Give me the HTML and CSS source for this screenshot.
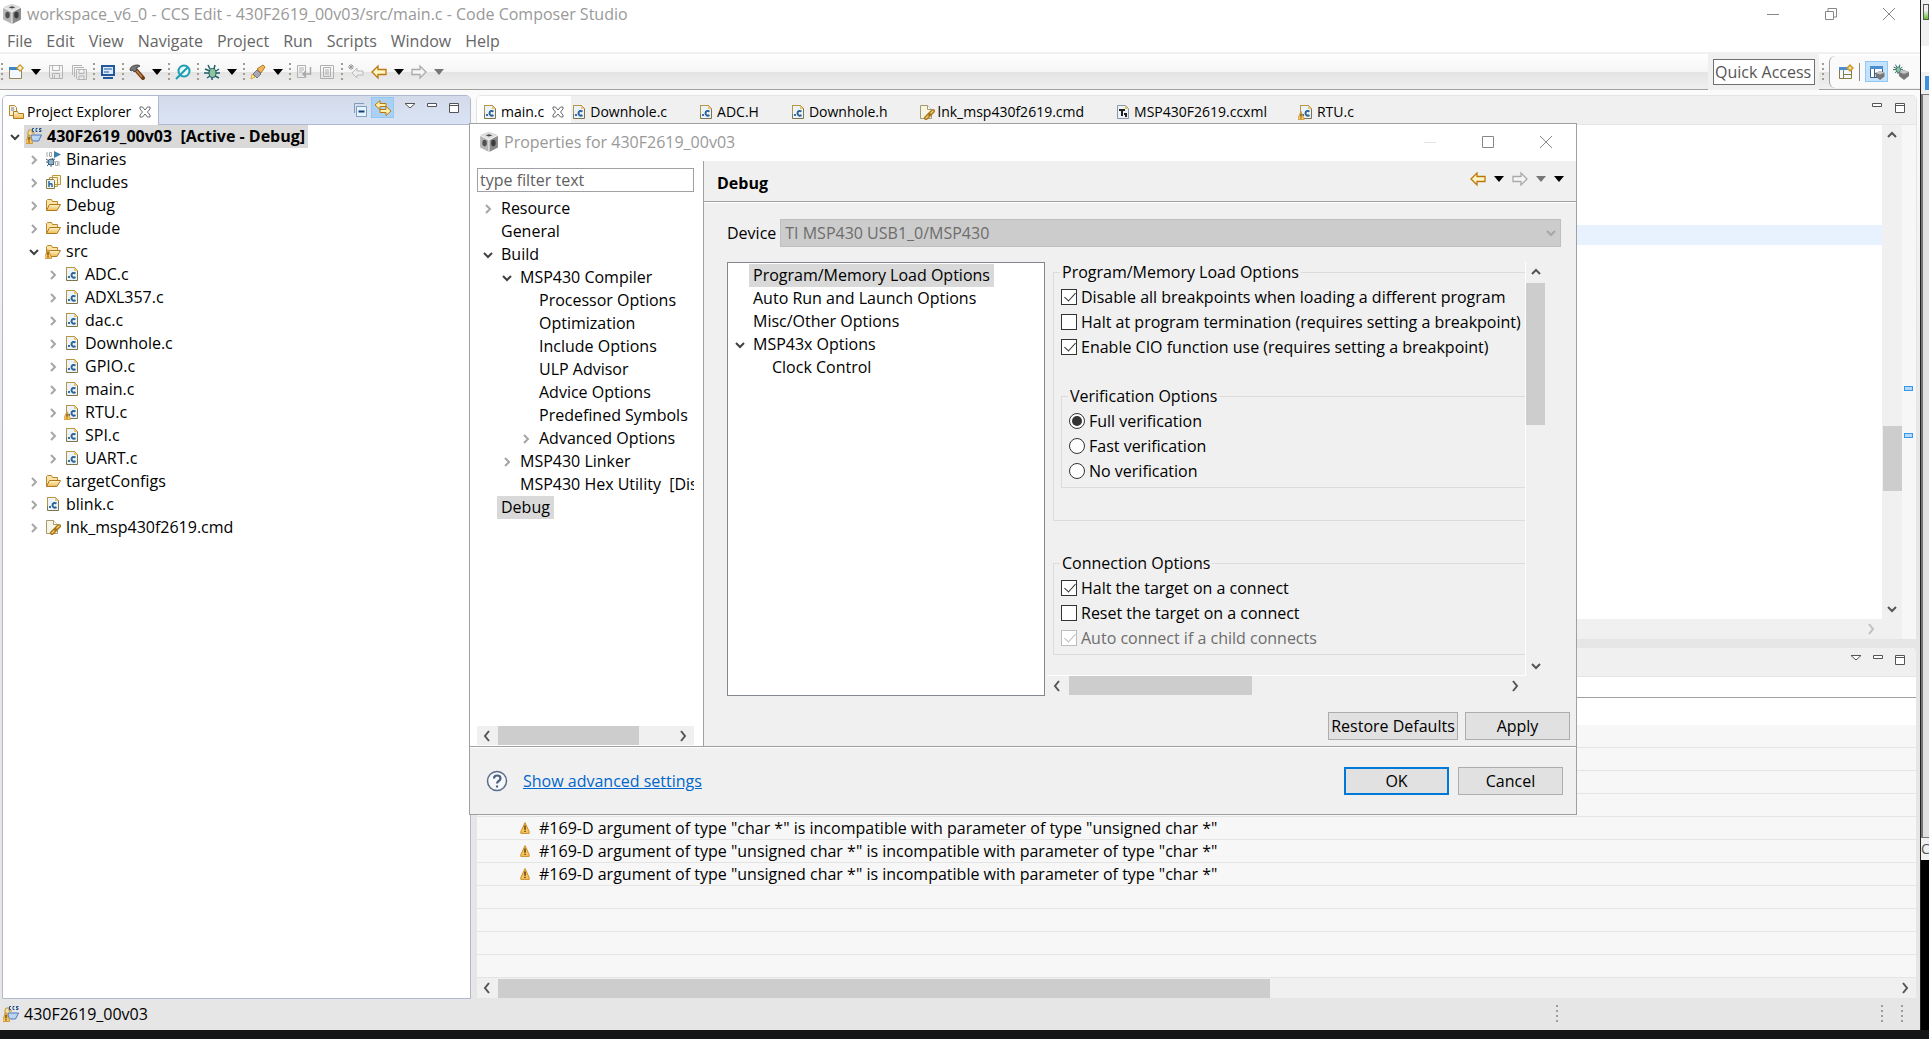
FILE: index.html
```html
<!DOCTYPE html>
<html lang="en">
<head>
<meta charset="utf-8">
<title>workspace_v6_0 - CCS Edit - 430F2619_00v03/src/main.c - Code Composer Studio</title>
<link rel="stylesheet" href="styles.css">
</head>
<body>

<!-- icons -->
<svg class="sprite" width="0" height="0">
	<linearGradient id="gold" x1="0" y1="0" x2="0" y2="1"><stop offset="0" stop-color="#fff6cf"/><stop offset="1" stop-color="#f0b94e"/></linearGradient>
	<symbol id="cube" viewBox="1 1 18 18">
		<path d="M10 1l8 3v11l-8 4-8-4V4z" fill="#b5b5b5"/>
		<path d="M10 1l8 3-8 4-8-4z" fill="#dcdcdc"/>
		<path d="M10 8l8-4v11l-8 4z" fill="#8a8a8a"/>
		<path d="M7 4l3-1 3 1-3 1z" fill="#444"/>
		<ellipse cx="6" cy="11" rx="2" ry="3" fill="#505050"/>
		<ellipse cx="14" cy="11" rx="2" ry="3" fill="#3c3c3c"/>
		<path d="M2 4l8 4 8-4M10 8v11" stroke="#f2f2f2" fill="none"/>
	</symbol>
	<symbol id="arrow-r" viewBox="0 0 10 12"><path d="M3 2l4 4-4 4" fill="none" stroke="#a6a6a6" stroke-width="2"/></symbol>
	<symbol id="arrow-d" viewBox="0 0 10 12"><path d="M1 4l4 4 4-4" fill="none" stroke="#404040" stroke-width="2"/></symbol>
	<symbol id="up" viewBox="0 0 12 12"><path d="M2 8l4-4 4 4" fill="none" stroke="#555" stroke-width="2"/></symbol>
	<symbol id="down" viewBox="0 0 12 12"><path d="M2 4l4 4 4-4" fill="none" stroke="#555" stroke-width="2"/></symbol>
	<symbol id="left" viewBox="0 0 12 12"><path d="M8 1L4 6l4 5" fill="none" stroke="#555" stroke-width="2"/></symbol>
	<symbol id="right" viewBox="0 0 12 12"><path d="M4 1l4 5-4 5" fill="none" stroke="currentColor" stroke-width="2"/></symbol>
	<symbol id="caret" viewBox="0 0 10 6"><path d="M0 0h10L5 6z" fill="currentColor"/></symbol>
	<symbol id="warn" viewBox="0 0 8 10"><path d="M4 .5L7.500 8v1.500h-7V8z" fill="#f7c560" stroke="#c98a24" stroke-width=".8" stroke-linejoin="round"/><path d="M4 3v3.500M4 7.200v1.200" stroke="#5a3a08" stroke-width="1.200"/></symbol>
	<symbol id="cfile" viewBox="0 0 16 16">
		<path d="M2.500 1.500h8l3 3v10h-11z" fill="#eaf2fb" stroke="#7d7448"/>
		<path d="M2.500 10V1.500h8l3 3" fill="none" stroke="#b9963f"/>
		<path d="M10 1.500v3.500h3.500z" fill="#e9c46d"/>
		<rect x="4" y="10" width="2" height="2" fill="#3a6ea5"/>
		<path d="M11.500 7.500c-1.500-1-4-.8-4 1.800s2.500 2.800 4 1.800" fill="none" stroke="#2e6496" stroke-width="2"/>
	</symbol>
	<symbol id="cwarn" viewBox="0 0 16 16"><use href="#cfile" width="16" height="16"/><use href="#warn" x="-1" y="7" width="8" height="9"/></symbol>
	<symbol id="lnk" viewBox="0 0 16 16">
		<path d="M1.500 1.500h7l4 4v9h-11z" fill="#f6f4e4" stroke="#a79a6c"/>
		<path d="M8.500 1.500v4h4" fill="#fff" stroke="#a79a6c"/>
		<path d="M7 14l3-3M10 11l4-4" stroke="#a5741a" stroke-width="4" stroke-linecap="round"/>
		<path d="M7 14l2-2M12 9l2-2" stroke="#f1cd6a" stroke-width="1.500" stroke-linecap="round"/>
	</symbol>
	<symbol id="ccxml" viewBox="0 0 16 16">
		<path d="M2.500 1.500h8l3 3v10h-11z" fill="#eef3f8" stroke="#8b98a8"/>
		<path d="M10 1.500v3.500h3.500z" fill="#e9c46d"/>
		<path d="M4 5h6v2H8v5H6V7H4zM9 9h3v4h-2v-2H9z" fill="#222"/>
	</symbol>
	<symbol id="folder" viewBox="0 0 16 16">
		<path d="M1.500 13.500v-10l1-1h4l1 2h5v3" fill="#fbe3a6" stroke="#b9852f"/>
		<path d="M1.500 13.500l3-6h11l-3.500 6z" fill="url(#gold)" stroke="#b07820"/>
	</symbol>
	<symbol id="fwarn" viewBox="0 0 16 16"><use href="#folder" width="16" height="16"/><use href="#warn" x="-1" y="6" width="8" height="10"/></symbol>
	<symbol id="ccs" viewBox="0 0 16 16">
		<path d="M2 13V4l1-2h3v3h3" fill="#f7dfa4" stroke="#b9963f"/>
		<path d="M5 7h10.500l-3 6H8c-2 0-3-3-3-6z" fill="#bcd5f3" stroke="#4a78b5"/>
		<path d="M8 .5H6.500v3H8M11.500 .5H10v3h1.500M15.500 .5H13.500v1.500h1.500v1.500h-2" fill="none" stroke="#234f8c"/>
		<use href="#warn" x="-1" y="6" width="8" height="10"/>
	</symbol>
	<symbol id="bin" viewBox="0 0 16 16">
		<path d="M2 1v5M4.500 1.500h2v4h-2zM14 10v5M10.500 10.500h2v4h-2z" fill="none" stroke="#a9a9a9"/>
		<path d="M9 0l7 3.500L9 7z" fill="#3e7fa8"/>
		<circle cx="6" cy="11" r="3" fill="#8fb0c8" stroke="#3b5f7c"/>
		<path d="M1 8l3 2M1 11h2M2 15l2-2M8 7l-1 2M9 14l-1-1M6 14v2M10 8L8 9" stroke="#3b5f7c"/>
	</symbol>
	<symbol id="inc" viewBox="0 0 16 16">
		<path d="M7.500 1.500h8v9h-8zM4.500 3.500h8v9h-8z" fill="#fbf3d6" stroke="#b9963f"/>
		<path d="M1.500 5.500h7l1 1v8h-8z" fill="#eaf2fb" stroke="#8a7b45"/>
		<path d="M4 7v6M4 10.500c2-1.500 3-.5 3 .5v2" fill="none" stroke="#2e6496" stroke-width="1.500"/>
	</symbol>
	<symbol id="explorer" viewBox="0 0 16 16">
		<path d="M1.500 1.500h5l2 2v8h-7z" fill="#fbf3d6" stroke="#b9852f"/>
		<path d="M3 4h3M3 6h3" stroke="#5f86b5"/>
		<path d="M5.500 14.500v-7h4l1 2h5v5z" fill="url(#gold)" stroke="#b07820"/>
	</symbol>
	<symbol id="close" viewBox="0 0 12 12"><path d="M1 1h2.500L6 4l2.500-3H11v2L8.500 6 11 9v2H8.500L6 8l-2.500 3H1V9l2.500-3L1 3z" fill="#fff" stroke="#6a6a6a"/></symbol>
	<symbol id="min" viewBox="0 0 12 12"><path d="M1.500 1.500h9v3h-9z" fill="#fff" stroke="#555"/></symbol>
	<symbol id="max" viewBox="0 0 12 12"><path d="M1.500 1.500h9v9h-9zM1.500 3.500h9" fill="#fff" stroke="#555"/></symbol>
	<symbol id="menu" viewBox="0 0 12 12"><path d="M1 1.500h10l-5 4.500z" fill="#fff" stroke="#555"/></symbol>
	<symbol id="collapse" viewBox="0 0 16 16"><path d="M2.500 11V1.500H12" fill="none" stroke="#7f9db9"/><path d="M4.500 4.500h10v10h-10z" fill="#e6f4ff" stroke="#7f9db9"/><path d="M6.500 9.500h6" stroke="#123f74" stroke-width="2"/></symbol>
	<symbol id="link" viewBox="0 0 16 16"><path d="M0 5l5-4.500v3h6v3H5v3zM16 11l-5-4.500v3H5v3h6v3z" fill="#fff0b0" stroke="#b9780c"/></symbol>
	<symbol id="new" viewBox="0 0 16 16"><path d="M1.500 3.500h12v11h-12z" fill="#f1f8ff" stroke="#9a8450"/><path d="M1 3h10v3H1z" fill="#3f86c8"/><path d="M12 0l4 4-4 4-4-4z" fill="#c99a2c"/><path d="M12 2v4M10 4h4" stroke="#fff6d0" stroke-width="1.500"/></symbol>
	<symbol id="save" viewBox="0 0 16 16"><path d="M1.500 1.500h13v13h-12l-1-1zM4.500 1.500v5h7v-5M4.500 14.500v-5h7v5M6.500 14v-3" fill="none" stroke="#b3b3b3"/></symbol>
	<symbol id="saveall" viewBox="0 0 16 16"><path d="M11 1.500H1.500V11M13 3.500H3.500V13M5.500 5.500h10v10h-9l-1-1zM8 5.500v4h5v-4M8 15v-3h5v3" fill="none" stroke="#b3b3b3"/></symbol>
	<symbol id="screen" viewBox="0 0 16 16"><path d="M1 1h14v11H1z" fill="#23589b"/><path d="M3 3h10v7H3z" fill="#dcecff"/><path d="M4 5h8M4 8h5" stroke="#23589b"/><path d="M3 14h10" stroke="#23589b" stroke-width="2"/></symbol>
	<symbol id="hammer" viewBox="0 0 16 16"><path d="M7 6l7 8" stroke="#6b3a14" stroke-width="4" stroke-linecap="round"/><path d="M7 6l6 7" stroke="#c98546" stroke-width="1.500"/><path d="M1 6c0-3 3-5 8-5l2 1-4 2 1 2-3 2-1-2-2 1z" fill="#777" stroke="#4a4a4a"/></symbol>
	<symbol id="find" viewBox="0 0 16 16"><circle cx="9" cy="7" r="5.500" fill="#eafafc" stroke="#1c9cb0" stroke-width="2"/><path d="M13 3L1 15" stroke="#1c9cb0" stroke-width="2"/></symbol>
	<symbol id="bug" viewBox="0 0 16 16"><ellipse cx="8.500" cy="9" rx="3.500" ry="4.500" fill="#8fc49a" stroke="#1d6068"/><path d="M1 5l5 2M0 9h5M3 14l3-2M12 7l3-2M12 9h4M11 12l4 2M6 5L4 1M10 5l1-4M8 13v3" stroke="#1d6068" stroke-width="1.500"/></symbol>
	<symbol id="torch" viewBox="0 0 16 16"><path d="M1 15l1-5 3 3z" fill="#fff3a0" stroke="#d9a93a"/><path d="M3 10l4-4 4 4-4 4z" fill="#a8a8b4" stroke="#76768a"/><path d="M7 5l6-4 2 2-4 6z" fill="#f2b85c" stroke="#b37420"/></symbol>
	<symbol id="page" viewBox="0 0 16 16"><path d="M1.500 1.500h8v12h-8zM3 4h5M3 6h5M3 8h3" fill="none" stroke="#b0b0b0"/><path d="M14.500 3v7H7M10 7l-3 3 3 3" fill="none" stroke="#a8a8a8" stroke-width="1.500"/></symbol>
	<symbol id="block" viewBox="0 0 16 16"><path d="M1.500 1.500h13v13h-13zM4.500 3.500h7v9h-7zM6 6h4M6 8h4M6 10h4" fill="none" stroke="#b0b0b0"/></symbol>
	<symbol id="last" viewBox="0 0 16 16"><path d="M4 9l5-5v3h6v4H9v3z" fill="#eee" stroke="#bbb"/><path d="M3 0v6M0 3h6M1 1l4 4M5 1L1 5" stroke="#999"/></symbol>
	<symbol id="back" viewBox="0 0 16 16"><path d="M1 8l6-6v3.500h8v5H7V14z" fill="#fff4c4" stroke="#b9780c" stroke-width="1.300"/></symbol>
	<symbol id="fwd" viewBox="0 0 16 16"><path d="M15 8L9 2v3.500H1v5h8V14z" fill="#f6f6f6" stroke="#aaa" stroke-width="1.300"/></symbol>
	<symbol id="persp" viewBox="0 0 16 16"><path d="M1.500 3.500h12v11h-12zM5.500 6v8M5 10.500h8" fill="#f1f8ff" stroke="#8a7b45"/><path d="M1 3h11v3H1z" fill="#4a90d0"/><path d="M12 0l4 4-4 4-4-4z" fill="#c99a2c"/><path d="M12 2.500v3M10.500 4h3" stroke="#fff6d0"/></symbol>
	<symbol id="gem" viewBox="0 0 10 10"><path d="M5 0l5 2v4l-5 4-5-4V2z" fill="#777"/><path d="M5 0l5 2-5 2-5-2z" fill="#c4c4c4"/></symbol>
	<symbol id="edit" viewBox="0 0 16 16"><path d="M1.500 2.500h12v11h-12zM5.500 5v8M5 9.500h8" fill="#fff" stroke="#355f8c"/><path d="M1 2h13v3H1z" fill="#4a90d0"/><use href="#gem" x="6" y="7" width="10" height="9"/></symbol>
	<symbol id="debug" viewBox="0 0 16 16"><use href="#bug" width="10" height="10"/><use href="#gem" x="6" y="6" width="10" height="10"/></symbol>
	<symbol id="help" viewBox="0 0 22 22"><circle cx="11" cy="11" r="9.500" fill="#f6f8fb" stroke="#5b6d8c" stroke-width="1.500"/><path d="M8 8.500c0-4 6.500-4 6.500 0 0 2.500-3.500 2.500-3.500 5M11 15.500v2" fill="none" stroke="#4b5f82" stroke-width="2.200"/></symbol>
	<symbol id="w-min" viewBox="0 0 14 14"><path d="M1 7.500h12" stroke="currentColor"/></symbol>
	<symbol id="w-max" viewBox="0 0 14 14"><path d="M1.500 1.500h11v11h-11z" fill="none" stroke="#888"/></symbol>
	<symbol id="w-rest" viewBox="0 0 14 14"><path d="M1.500 4.500h8v8h-8zM4 4V1.500h8.500V10H10" fill="none" stroke="#888"/></symbol>
	<symbol id="w-close" viewBox="0 0 14 14"><path d="M1 1l12 12M13 1L1 13" stroke="#888"/></symbol>
</svg>

<div class="screen">
<div class="window">
	<div class="titlebar">
		<svg class="i20"><use href="#cube"/></svg>
		<span class="title">workspace_v6_0 - CCS Edit - 430F2619_00v03/src/main.c - Code Composer Studio</span>
		<div class="winbtns">
			<button aria-label="Minimize"><svg class="i14"><use href="#w-min"/></svg></button>
			<button aria-label="Restore"><svg class="i14"><use href="#w-rest"/></svg></button>
			<button aria-label="Close"><svg class="i14"><use href="#w-close"/></svg></button>
		</div>
	</div>
	<nav class="menubar">
		<a href="#">File</a><a href="#">Edit</a><a href="#">View</a><a href="#">Navigate</a><a href="#">Project</a><a href="#">Run</a><a href="#">Scripts</a><a href="#">Window</a><a href="#">Help</a>
	</nav>
	<div class="toolbar">
		<i class="dots"></i>
		<button aria-label="New"><svg class="i16"><use href="#new"/></svg></button>
		<button aria-label="New menu"><svg class="caret"><use href="#caret"/></svg></button>
		<button aria-label="Save"><svg class="i16"><use href="#save"/></svg></button>
		<button aria-label="Save all"><svg class="i16"><use href="#saveall"/></svg></button>
		<i class="dots"></i>
		<button aria-label="Console"><svg class="i16"><use href="#screen"/></svg></button>
		<i class="dots"></i>
		<button aria-label="Build"><svg class="i16"><use href="#hammer"/></svg></button>
		<button aria-label="Build menu"><svg class="caret"><use href="#caret"/></svg></button>
		<i class="dots"></i>
		<button aria-label="Find"><svg class="i16"><use href="#find"/></svg></button>
		<i class="dots"></i>
		<button aria-label="Debug"><svg class="i16"><use href="#bug"/></svg></button>
		<button aria-label="Debug menu"><svg class="caret"><use href="#caret"/></svg></button>
		<i class="dots"></i>
		<button aria-label="Search"><svg class="i16"><use href="#torch"/></svg></button>
		<button aria-label="Search menu"><svg class="caret"><use href="#caret"/></svg></button>
		<i class="dots"></i>
		<button aria-label="Word wrap"><svg class="i16"><use href="#page"/></svg></button>
		<button aria-label="Block selection"><svg class="i16"><use href="#block"/></svg></button>
		<i class="dots"></i>
		<button aria-label="Last edit"><svg class="i16"><use href="#last"/></svg></button>
		<button aria-label="Back"><svg class="i16"><use href="#back"/></svg></button>
		<button aria-label="Back menu"><svg class="caret"><use href="#caret"/></svg></button>
		<button aria-label="Forward"><svg class="i16"><use href="#fwd"/></svg></button>
		<button aria-label="Forward menu"><svg class="caret off"><use href="#caret"/></svg></button>
		<div class="quick"><input type="text" placeholder="Quick Access" aria-label="Quick Access"></div>
		<i class="dots"></i>
		<div class="perspectives">
			<button aria-label="Open perspective"><svg class="i16"><use href="#persp"/></svg></button>
			<i class="bar"></i>
			<button class="on" aria-label="CCS Edit"><svg class="i16"><use href="#edit"/></svg></button>
			<button aria-label="CCS Debug"><svg class="i16"><use href="#debug"/></svg></button>
		</div>
	</div>

	<div class="work">
		<section class="panel explorer">
			<div class="tabs">
				<div class="tab active"><svg class="i16"><use href="#explorer"/></svg>Project Explorer<svg class="i12"><use href="#close"/></svg></div>
				<div class="tools">
					<button aria-label="Collapse all"><svg class="i16"><use href="#collapse"/></svg></button>
					<button class="on" aria-label="Link with editor"><svg class="i16"><use href="#link"/></svg></button>
					<button aria-label="View menu"><svg class="i12"><use href="#menu"/></svg></button>
					<button aria-label="Minimize"><svg class="i12"><use href="#min"/></svg></button>
					<button aria-label="Maximize"><svg class="i12"><use href="#max"/></svg></button>
				</div>
			</div>
			<ul class="tree files">
				<li><svg class="exp"><use href="#arrow-d"/></svg><span class="sel bold"><svg class="i16"><use href="#ccs"/></svg>430F2619_00v03&nbsp; [Active - Debug]</span></li>
				<li class="d1"><svg class="exp"><use href="#arrow-r"/></svg><span><svg class="i16"><use href="#bin"/></svg>Binaries</span></li>
				<li class="d1"><svg class="exp"><use href="#arrow-r"/></svg><span><svg class="i16"><use href="#inc"/></svg>Includes</span></li>
				<li class="d1"><svg class="exp"><use href="#arrow-r"/></svg><span><svg class="i16"><use href="#folder"/></svg>Debug</span></li>
				<li class="d1"><svg class="exp"><use href="#arrow-r"/></svg><span><svg class="i16"><use href="#folder"/></svg>include</span></li>
				<li class="d1"><svg class="exp"><use href="#arrow-d"/></svg><span><svg class="i16"><use href="#fwarn"/></svg>src</span></li>
				<li class="d2"><svg class="exp"><use href="#arrow-r"/></svg><span><svg class="i16"><use href="#cfile"/></svg>ADC.c</span></li>
				<li class="d2"><svg class="exp"><use href="#arrow-r"/></svg><span><svg class="i16"><use href="#cfile"/></svg>ADXL357.c</span></li>
				<li class="d2"><svg class="exp"><use href="#arrow-r"/></svg><span><svg class="i16"><use href="#cfile"/></svg>dac.c</span></li>
				<li class="d2"><svg class="exp"><use href="#arrow-r"/></svg><span><svg class="i16"><use href="#cfile"/></svg>Downhole.c</span></li>
				<li class="d2"><svg class="exp"><use href="#arrow-r"/></svg><span><svg class="i16"><use href="#cfile"/></svg>GPIO.c</span></li>
				<li class="d2"><svg class="exp"><use href="#arrow-r"/></svg><span><svg class="i16"><use href="#cfile"/></svg>main.c</span></li>
				<li class="d2"><svg class="exp"><use href="#arrow-r"/></svg><span><svg class="i16"><use href="#cwarn"/></svg>RTU.c</span></li>
				<li class="d2"><svg class="exp"><use href="#arrow-r"/></svg><span><svg class="i16"><use href="#cfile"/></svg>SPI.c</span></li>
				<li class="d2"><svg class="exp"><use href="#arrow-r"/></svg><span><svg class="i16"><use href="#cfile"/></svg>UART.c</span></li>
				<li class="d1"><svg class="exp"><use href="#arrow-r"/></svg><span><svg class="i16"><use href="#folder"/></svg>targetConfigs</span></li>
				<li class="d1"><svg class="exp"><use href="#arrow-r"/></svg><span><svg class="i16"><use href="#cfile"/></svg>blink.c</span></li>
				<li class="d1"><svg class="exp"><use href="#arrow-r"/></svg><span><svg class="i16"><use href="#lnk"/></svg>lnk_msp430f2619.cmd</span></li>
			</ul>
		</section>

		<div class="column">
			<section class="panel editor">
				<div class="tabs">
					<div class="tab active"><svg class="i16"><use href="#cfile"/></svg>main.c<svg class="i12"><use href="#close"/></svg></div>
					<div class="tab"><svg class="i16"><use href="#cfile"/></svg>Downhole.c</div>
					<div class="tab"><svg class="i16"><use href="#cfile"/></svg>ADC.H</div>
					<div class="tab"><svg class="i16"><use href="#cfile"/></svg>Downhole.h</div>
					<div class="tab"><svg class="i16"><use href="#lnk"/></svg>lnk_msp430f2619.cmd</div>
					<div class="tab"><svg class="i16"><use href="#ccxml"/></svg>MSP430F2619.ccxml</div>
					<div class="tab"><svg class="i16"><use href="#cwarn"/></svg>RTU.c</div>
					<div class="tools">
						<button aria-label="Minimize"><svg class="i12"><use href="#min"/></svg></button>
						<button aria-label="Maximize"><svg class="i12"><use href="#max"/></svg></button>
					</div>
				</div>
				<div class="code">
					<div class="text"><div class="current"></div></div>
					<div class="vscroll"><svg class="i12"><use href="#up"/></svg><i class="thumb"></i><svg class="i12 end"><use href="#down"/></svg></div>
					<div class="ruler"><i></i><i></i></div>
					<div class="hscroll"><svg class="i12 faint end"><use href="#right"/></svg></div>
				</div>
			</section>

			<section class="panel problems">
				<div class="tabs">
					<div class="tools">
						<button aria-label="View menu"><svg class="i12"><use href="#menu"/></svg></button>
						<button aria-label="Minimize"><svg class="i12"><use href="#min"/></svg></button>
						<button aria-label="Maximize"><svg class="i12"><use href="#max"/></svg></button>
					</div>
				</div>
				<table>
					<thead><tr><th></th></tr></thead>
					<tbody>
						<tr class="first"><td></td></tr>
						<tr><td></td></tr>
						<tr><td></td></tr>
						<tr><td></td></tr>
						<tr><td></td></tr>
						<tr><td><svg class="i12"><use href="#warn"/></svg>#169-D argument of type "char *" is incompatible with parameter of type "unsigned char *"</td></tr>
						<tr><td><svg class="i12"><use href="#warn"/></svg>#169-D argument of type "unsigned char *" is incompatible with parameter of type "char *"</td></tr>
						<tr><td><svg class="i12"><use href="#warn"/></svg>#169-D argument of type "unsigned char *" is incompatible with parameter of type "char *"</td></tr>
						<tr><td></td></tr>
						<tr><td></td></tr>
						<tr><td></td></tr>
						<tr><td></td></tr>
					</tbody>
				</table>
				<div class="hscroll"><svg class="i12"><use href="#left"/></svg><i class="thumb"></i><svg class="i12 end"><use href="#right"/></svg></div>
			</section>
		</div>
	</div>

	<div class="status">
		<svg class="i16"><use href="#ccs"/></svg><span>430F2619_00v03</span>
		<i class="dots mid"></i><i class="dots"></i><i class="dots"></i>
	</div>
</div>
<div class="behind"><i class="pic"></i><i class="line"></i><i class="blue"></i><div class="body"></div><span>C</span></div>
</div>
<div class="taskbar"><span>10:00</span></div>

<!-- properties dialog -->
<div class="dialog" role="dialog" aria-label="Properties for 430F2619_00v03">
	<div class="titlebar">
		<svg class="i20"><use href="#cube"/></svg>
		<span class="title">Properties for 430F2619_00v03</span>
		<div class="winbtns">
			<button class="off" aria-label="Minimize" disabled><svg class="i14"><use href="#w-min"/></svg></button>
			<button aria-label="Maximize"><svg class="i14"><use href="#w-max"/></svg></button>
			<button aria-label="Close"><svg class="i14"><use href="#w-close"/></svg></button>
		</div>
	</div>
	<div class="props">
		<div class="side">
			<input type="text" placeholder="type filter text" aria-label="type filter text">
			<ul class="tree">
				<li><svg class="exp"><use href="#arrow-r"/></svg><span>Resource</span></li>
				<li><i class="exp"></i><span>General</span></li>
				<li><svg class="exp"><use href="#arrow-d"/></svg><span>Build</span></li>
				<li class="d1"><svg class="exp"><use href="#arrow-d"/></svg><span>MSP430 Compiler</span></li>
				<li class="d2"><i class="exp"></i><span>Processor Options</span></li>
				<li class="d2"><i class="exp"></i><span>Optimization</span></li>
				<li class="d2"><i class="exp"></i><span>Include Options</span></li>
				<li class="d2"><i class="exp"></i><span>ULP Advisor</span></li>
				<li class="d2"><i class="exp"></i><span>Advice Options</span></li>
				<li class="d2"><i class="exp"></i><span>Predefined Symbols</span></li>
				<li class="d2"><svg class="exp"><use href="#arrow-r"/></svg><span>Advanced Options</span></li>
				<li class="d1"><svg class="exp"><use href="#arrow-r"/></svg><span>MSP430 Linker</span></li>
				<li class="d1"><i class="exp"></i><span>MSP430 Hex Utility&nbsp; [Disabled]</span></li>
				<li><i class="exp"></i><span class="sel">Debug</span></li>
			</ul>
			<div class="hscroll"><svg class="i12"><use href="#left"/></svg><i class="thumb"></i><svg class="i12 end"><use href="#right"/></svg></div>
		</div>
		<div class="main">
			<div class="head">
				<h1>Debug</h1>
				<button aria-label="Back"><svg class="i16"><use href="#back"/></svg></button>
				<button aria-label="Back menu"><svg class="caret"><use href="#caret"/></svg></button>
				<button aria-label="Forward"><svg class="i16"><use href="#fwd"/></svg></button>
				<button aria-label="Forward menu"><svg class="caret off"><use href="#caret"/></svg></button>
				<button aria-label="Menu"><svg class="caret"><use href="#caret"/></svg></button>
			</div>
			<div class="device">
				<label for="device">Device</label>
				<div class="combo">
					<select id="device" disabled><option>TI MSP430 USB1_0/MSP430</option></select>
					<svg class="i12"><use href="#down"/></svg>
				</div>
			</div>
			<div class="panes">
				<ul class="tree list">
					<li><i class="exp"></i><span class="sel">Program/Memory Load Options</span></li>
					<li><i class="exp"></i><span>Auto Run and Launch Options</span></li>
					<li><i class="exp"></i><span>Misc/Other Options</span></li>
					<li><svg class="exp"><use href="#arrow-d"/></svg><span>MSP43x Options</span></li>
					<li class="d1"><i class="exp"></i><span>Clock Control</span></li>
				</ul>
				<div class="scroller">
					<div class="view">
						<fieldset class="load">
							<legend>Program/Memory Load Options</legend>
							<label><input type="checkbox" checked>Disable all breakpoints when loading a different program</label>
							<label><input type="checkbox">Halt at program termination (requires setting a breakpoint)</label>
							<label><input type="checkbox" checked>Enable CIO function use (requires setting a breakpoint)</label>
							<fieldset>
								<legend>Verification Options</legend>
								<label><input type="radio" name="verify" checked>Full verification</label>
								<label><input type="radio" name="verify">Fast verification</label>
								<label><input type="radio" name="verify">No verification</label>
							</fieldset>
						</fieldset>
						<fieldset>
							<legend>Connection Options</legend>
							<label><input type="checkbox" checked>Halt the target on a connect</label>
							<label><input type="checkbox">Reset the target on a connect</label>
							<label class="off"><input type="checkbox" checked disabled>Auto connect if a child connects</label>
						</fieldset>
					</div>
					<div class="vscroll"><svg class="i12"><use href="#up"/></svg><i class="thumb"></i><svg class="i12 end"><use href="#down"/></svg></div>
					<div class="hscroll"><svg class="i12"><use href="#left"/></svg><i class="thumb"></i><svg class="i12 end"><use href="#right"/></svg></div>
				</div>
			</div>
			<div class="actions">
				<button class="btn wide">Restore Defaults</button>
				<button class="btn">Apply</button>
			</div>
		</div>
	</div>
	<div class="foot">
		<button aria-label="Help"><svg class="i22"><use href="#help"/></svg></button>
		<a href="#">Show advanced settings</a>
		<button class="btn ok">OK</button>
		<button class="btn">Cancel</button>
	</div>
</div>

</body>
</html>
```
FILE: styles.css
```css
* {
	box-sizing: border-box;
}
body {
	margin: 0;
	height: 100vh;
	display: flex;
	flex-direction: column;
	overflow: hidden;
	background: #000;
	color: #000;
	font-family: "Open Sans", "Noto Sans", sans-serif;
	font-size: 16px;
	line-height: 22px;
}
button, input, select {
	font: inherit;
	color: inherit;
}
button {
	border: 0;
	padding: 0;
	background: none;
	display: flex;
	align-items: center;
	justify-content: center;
}
ul {
	list-style: none;
	margin: 0;
	padding: 0;
}
svg {
	display: block;
	flex: none;
	overflow: visible;
}
.sprite { position: absolute; }
.i12 { width: 12px; height: 12px; }
.i14 { width: 14px; height: 14px; }
.i16 { width: 16px; height: 16px; }
.i20 { width: 20px; height: 20px; }
.i22 { width: 22px; height: 22px; }
.caret { width: 10px; height: 6px; color: #000; }
.caret.off { color: #777; }

/* main window */
.screen {
	flex: 1;
	min-height: 0;
	display: flex;
}
.window {
	flex: 1;
	min-width: 0;
	display: flex;
	flex-direction: column;
	background: #fff;
	border-right: 1px solid #222;
}
.titlebar {
	display: flex;
	align-items: center;
	height: 28px;
	padding: 0 2px;
	gap: 5px;
	color: #999;
}
.title { flex: 1; }
.winbtns {
	display: flex;
	color: #888;
}
.winbtns button { width: 58px; height: 26px; }
.winbtns .off { color: #e4e4e4; }
.menubar {
	display: flex;
	gap: 14px;
	height: 26px;
	padding: 2px 7px 0;
	border-bottom: 2px solid #f0f0f0;
}
.menubar a {
	color: #666;
	text-decoration: none;
}
.toolbar {
	display: flex;
	align-items: center;
	gap: 7px;
	height: 36px;
	padding-left: 2px;
	border-bottom: 1px solid #a0a0a0;
	background: linear-gradient(#fff, #f6f6f6 50%, #e4e4e4 52%, #f0f0f0);
}
.dots {
	width: 2px;
	height: 17px;
	margin: 0 -2px 0 -1px;
	background: repeating-linear-gradient(#a39d90 0 2px, transparent 2px 5px);
}
.quick {
	margin-left: auto;
	margin-right: -3px;
	align-self: stretch;
	margin-bottom: -1px;
	padding: 5px 4px 0 5px;
	background: #f0f0f0;
}
.quick input {
	display: block;
	width: 102px;
	height: 26px;
	padding: 0 1px;
	border: 1px solid #707070;
	background: #fff;
}
.quick input::placeholder { color: #555; }
.perspectives {
	display: flex;
	align-items: center;
	gap: 5px;
	height: 32px;
	padding: 0 11px 0 8px;
	border-left: 1px solid #a0a0a0;
	border-radius: 6px 0 0 6px;
	background: #fafafa;
}
.perspectives .on {
	width: 23px;
	height: 21px;
	border: 1px solid #90c8f6;
	background: #c4e2fb;
}
.bar { width: 1px; height: 18px; background: #888; }

.work {
	flex: 1;
	min-height: 0;
	display: grid;
	grid-template-columns: 469px 1fr;
	gap: 5px;
	padding: 5px 3px 0 2px;
	background: linear-gradient(#fbfbfb, #e6e6e6 40%);
}
.column {
	min-width: 0;
	display: flex;
	flex-direction: column;
	gap: 7px;
}
.panel {
	border: 1px solid #e5e5e5;
	border-radius: 5px 5px 0 0;
	background: #fff;
	overflow: hidden;
}
.tabs {
	display: flex;
	height: 29px;
	background: #f0f0f0;
	border-bottom: 1px solid #e5e5e5;
	font-size: 14px;
}
.tab {
	display: flex;
	align-items: center;
	gap: 3px;
	padding: 3px 31px 0 0;
	white-space: nowrap;
}
.tab .i12 { margin-left: 5px; }
.tab.active {
	height: 29px;
	padding: 3px 7px 0 5px;
	background: #fff;
}
.tools {
	display: flex;
	align-items: flex-start;
	gap: 11px;
	margin-left: auto;
	padding: 6px 10px 0 0;
}
.explorer { border-color: #b2b9cf; }
.explorer .tabs {
	background: linear-gradient(#d3dbea, #dae3f5);
	border-color: #b2b9cf;
}
.explorer .tab.active { border-right: 1px solid #b2b9cf; }
.explorer .tools { gap: 10px; }
.explorer .tools .on {
	width: 23px;
	height: 21px;
	margin: -5px 0 0 -7px;
	border: 1px solid #90c8f6;
	background: #abd0f2;
}

.tree { white-space: nowrap; overflow: hidden; }
.tree li {
	display: flex;
	align-items: center;
	height: 23px;
	padding-left: 4px;
}
.tree .d1 { padding-left: 23px; }
.tree .d2 { padding-left: 42px; }
.exp {
	width: 10px;
	height: 12px;
	margin-right: 4px;
	flex: none;
}
.tree span {
	display: flex;
	align-items: center;
	gap: 5px;
	height: 23px;
	padding: 0 4px 1px;
}
.files li { padding-left: 7px; }
.files .d1 { padding-left: 26px; }
.files .d2 { padding-left: 45px; }
.files span { padding: 0 3px 1px 2px; }
.tree .sel { background: #d9d9d9; }
.bold { font-weight: bold; }

.vscroll, .hscroll {
	display: flex;
	align-items: center;
	background: #f0f0f0;
	color: #555;
}
.vscroll { width: 19px; flex-direction: column; padding: 4px 0; }
.hscroll { height: 19px; padding: 0 5px 0 4px; }
.thumb { background: #cdcdcd; display: block; }
.hscroll .thumb { height: 19px; margin-left: 5px; }
.vscroll .thumb { width: 19px; margin-top: 5px; }
.hscroll .end { margin-left: auto; }
.vscroll .end { margin-top: auto; }
.faint { color: #bfbfbf; }

.editor {
	flex: 1;
	display: flex;
	flex-direction: column;
}
.code {
	flex: 1;
	display: grid;
	grid-template: 1fr 20px / 1fr 20px 14px;
}
.text { padding-top: 100px; }
.current { height: 20px; background: #e8f2fe; }
.code .vscroll { width: 20px; }
.code .thumb { height: 65px; margin-top: 285px; }
.code .hscroll {
	grid-column: 1 / 3;
	grid-row: 2;
	height: 20px;
	padding-right: 25px;
}
.ruler {
	grid-column: 3;
	grid-row: 1 / 3;
	padding: 261px 3px 0 2px;
	background: #f7f7f7;
}
.ruler i {
	display: block;
	height: 5px;
	margin-bottom: 42px;
	border: 1px solid #3399f0;
	background: #b4d8f8;
}

.problems .tools { gap: 10px; }
.problems table {
	width: 100%;
	border-collapse: separate;
	border-spacing: 0;
}
.problems th {
	height: 21px;
	padding: 0;
	border-bottom: 1px solid #a0a0a0;
}
.problems td {
	height: 23px;
	padding: 0 0 0 42px;
	border-bottom: 1px solid #e4e4e4;
	background: #f7f7f7;
}
.problems .first td {
	height: 27px;
	border: 0;
	background: #fff;
}
.problems td svg {
	display: inline-block;
	margin-right: 8px;
}
.problems .hscroll { height: 20px; }
.problems .thumb { width: 772px; }

.status {
	display: flex;
	align-items: center;
	height: 31px;
	gap: 5px;
	padding: 0 14px 2px 3px;
	background: #e6e6e6;
}
.status .dots { margin: 0 3px 0 10px; }
.status .mid { margin-left: auto; margin-right: 308px; }

/* sliver of the window behind */
.behind {
	width: 8px;
	display: flex;
	flex-direction: column;
	height: 860px;
	background: #f0f0f0;
	font-size: 14px;
	color: #555;
	overflow: hidden;
}
.behind .pic {
	height: 16px;
	margin: 4px 0 0 2px;
	border: 1px solid #555;
	background: linear-gradient(#eee 40%, #5cbf2a);
}
.behind .line { height: 26px; margin-top: 26px; background: #fff; }
.behind .blue { height: 14px; margin: 4px 0 4px 4px; background: #3d8fe0; }
.behind .body {
	flex: 1;
	border: solid #777;
	border-width: 1px 0 1px 2px;
	background: #e1e1e1;
}
.taskbar {
	height: 9px;
	overflow: hidden;
	background: #141517;
	color: #fff;
	font-size: 13px;
	line-height: 26px;
	text-align: right;
	padding-right: 106px;
}

/* dialog */
.dialog {
	position: absolute;
	left: 469px;
	right: 352px;
	top: 123px;
	border: 1px solid #a0a0a0;
	background: #f0f0f0;
}
.dialog .titlebar {
	height: 37px;
	padding: 0 1px 2px 9px;
	background: #fff;
}
.props {
	display: grid;
	grid-template-columns: 234px 1fr;
	border-bottom: 1px solid #a0a0a0;
}
.side {
	min-width: 0;
	display: flex;
	flex-direction: column;
	padding: 7px 9px 1px 7px;
	border-right: 1px solid #a0a0a0;
	background: #fff;
}
.side input {
	height: 24px;
	width: 100%;
	margin-bottom: 5px;
	padding: 0 2px;
	border: 1px solid #a0a0a5;
}
.side input::placeholder { color: #606060; }
.side .tree { flex: 1; }
.side .tree li { padding-left: 6px; }
.side .tree .d1 { padding-left: 25px; }
.side .tree .d2 { padding-left: 44px; }
.side .thumb { width: 141px; }
.main { min-width: 0; }
.head {
	display: flex;
	align-items: center;
	gap: 8px;
	height: 41px;
	padding: 0 12px 5px 13px;
	border-bottom: 1px solid #a0a0a0;
	box-shadow: 0 1px #fff;
}
h1 {
	margin: 8px auto 0 0;
	font-size: 16px;
}
.device {
	display: flex;
	align-items: center;
	gap: 4px;
	padding: 17px 15px 15px 23px;
}
.combo { position: relative; flex: 1; }
.combo select {
	display: block;
	appearance: none;
	width: 100%;
	height: 28px;
	padding: 0 4px;
	border: 1px solid #bfbfbf;
	border-radius: 0;
	background: #ccc;
	color: #6d6d6d;
	opacity: 1;
}
.combo svg {
	position: absolute;
	right: 4px;
	top: 8px;
	opacity: .3;
}
.panes {
	display: flex;
	gap: 2px;
	padding: 0 30px 0 23px;
}
.list {
	width: 318px;
	flex: none;
	border: 1px solid #828790;
	background: #fff;
	padding: 1px 0 0 3px;
}
.scroller {
	flex: 1;
	min-width: 0;
	display: grid;
	grid-template: 414px 20px / 1fr 20px;
}
.view {
	overflow: hidden;
	padding-left: 6px;
	border: solid #fff;
	border-width: 0 1px 1px 0;
	white-space: nowrap;
}
.scroller .vscroll .thumb { height: 142px; }
.scroller .hscroll .thumb { width: 183px; margin-left: 6px; }
fieldset {
	min-width: 0;
	margin: 0;
	padding: 2px 0 4px 7px;
	border: 1px solid #dcdcdc;
	border-right: 0;
}
legend {
	margin-left: -1px;
	padding: 0 2px;
	line-height: 20px;
}
fieldset fieldset { margin-top: 27px; }
.load { padding-bottom: 32px; margin-bottom: 32px; }
fieldset label {
	display: flex;
	align-items: center;
	gap: 4px;
	height: 25px;
}
label.off { color: #6d6d6d; }
fieldset input {
	appearance: none;
	flex: none;
	width: 16px;
	height: 16px;
	margin: 0;
	border: 1px solid #333;
	background: #fff;
}
input[type=checkbox]:checked::after {
	content: "";
	display: block;
	width: 5px;
	height: 10px;
	margin: 0 0 0 5px;
	border: solid #333;
	border-width: 0 1px 1px 0;
	transform: rotate(42deg);
}
input[type=radio] { border-radius: 50%; }
input[type=radio]:checked::after {
	content: "";
	display: block;
	width: 10px;
	height: 10px;
	margin: 2px;
	border-radius: 50%;
	background: #333;
}
fieldset input:disabled, input[type=checkbox]:disabled::after { border-color: #bcbcbc; }
.actions {
	display: flex;
	justify-content: flex-end;
	gap: 7px;
	padding: 16px 6px 6px;
}
.btn {
	width: 105px;
	height: 28px;
	border: 1px solid #adadad;
	background: #e1e1e1;
}
.btn.wide { width: 130px; }
.btn.ok { margin-left: auto; border: 2px solid #0078d7; }
.foot {
	display: flex;
	align-items: center;
	gap: 9px;
	height: 67px;
	padding: 0 13px 0 16px;
	border-top: 1px solid #fff;
}
.foot a { color: #0066cc; margin-left: 6px; }
```
